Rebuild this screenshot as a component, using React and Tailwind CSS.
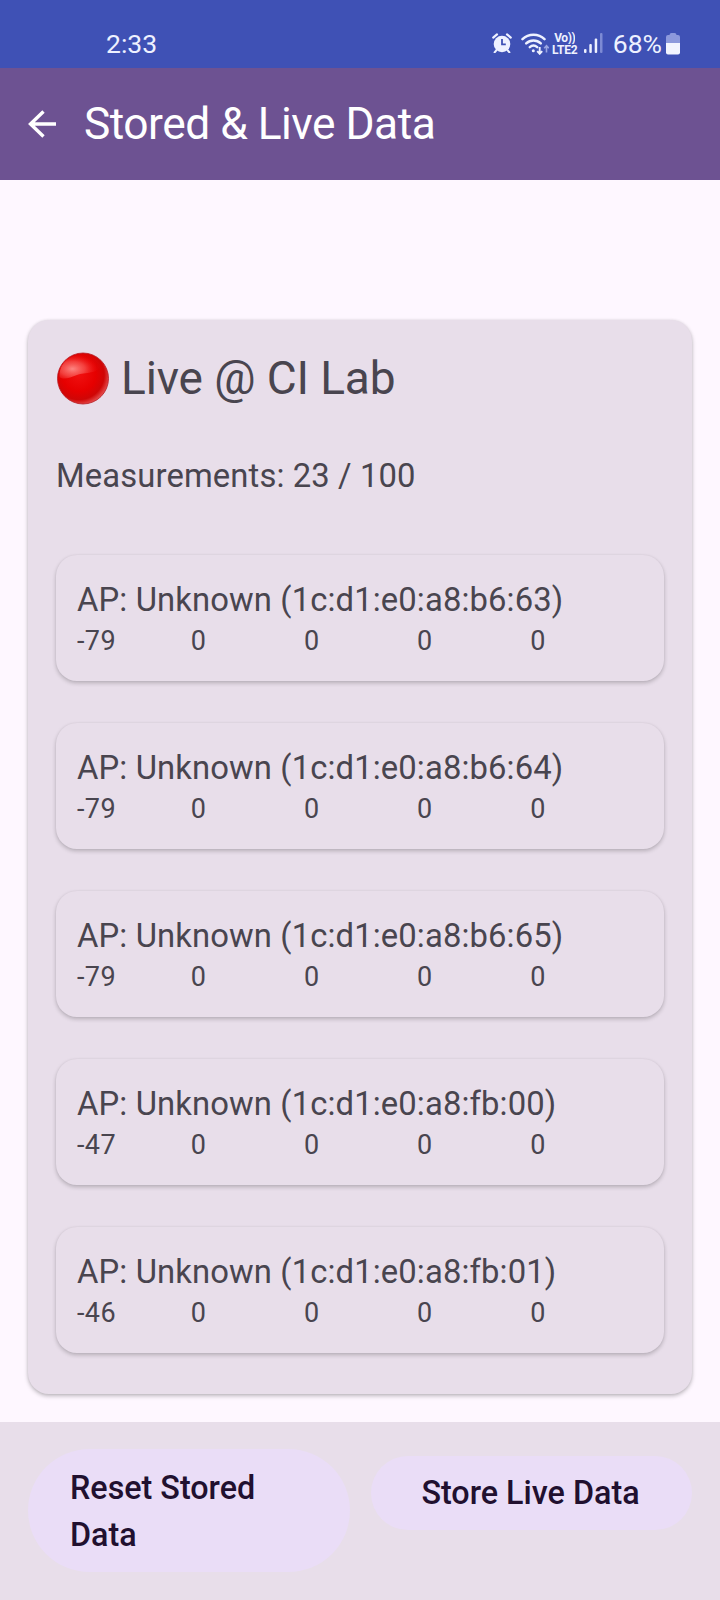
const accessPoints = [
  { mac: '1c:d1:e0:a8:b6:63', values: [-79, 0, 0, 0, 0] },
  { mac: '1c:d1:e0:a8:b6:64', values: [-79, 0, 0, 0, 0] },
  { mac: '1c:d1:e0:a8:b6:65', values: [-79, 0, 0, 0, 0] },
  { mac: '1c:d1:e0:a8:fb:00', values: [-47, 0, 0, 0, 0] },
  { mac: '1c:d1:e0:a8:fb:01', values: [-46, 0, 0, 0, 0] },
];

function AlarmIcon() {
  return (
    <svg className="h-5 w-5" viewBox="0 0 20 20" fill="none">
      <circle cx="10" cy="11" r="8.3" fill="#eef1ff" />
      <path d="M1.2 4.6 5 1.4M18.8 4.6 15 1.4" stroke="#eef1ff" strokeWidth="2.2" strokeLinecap="round" />
      <path d="M4.6 17 2.6 19.4M15.4 17l2 2.4" stroke="#eef1ff" strokeWidth="2" strokeLinecap="round" />
      <path d="M10 6v5.3h3.8" stroke="#3f51b5" strokeWidth="1.8" />
    </svg>
  );
}

function WifiIcon() {
  return (
    <svg className="h-[22px] w-[28px]" viewBox="0 0 28 22" fill="none">
      <g stroke="#eef1ff" strokeWidth="2.5" strokeLinecap="round">
        <path d="M1.5 6.2C7.5.4 17.5.4 23.5 6.2" />
        <path d="M5.2 10.4c4.2-3.9 10.4-3.9 14.6 0" />
        <path d="M8.8 14.2c2.2-2 5.2-2 7.4 0" />
      </g>
      <circle cx="12.3" cy="17.8" r="1.5" fill="#eef1ff" />
      <path d="M18.7 14v6.5M16.2 18.2l2.5 2.6 2.5-2.6" stroke="#eef1ff" strokeWidth="1.9" />
      <path d="M25.5 19.5V13M23.2 15.3l2.3-2.5 2.3 2.5" stroke="#9aa5e2" strokeWidth="1.6" />
    </svg>
  );
}

function VolteIcon() {
  return (
    <div className="flex w-[28px] flex-col items-center text-[12px] leading-[12px] font-bold text-[#eef1ff]">
      <span className="block h-[12px] overflow-hidden tracking-[-0.4px]">Vo))</span>
      <span className="block h-[12px] overflow-hidden tracking-[-0.2px]">LTE2</span>
    </div>
  );
}

function SignalIcon() {
  return (
    <svg className="h-5 w-[19px]" viewBox="0 0 19 20">
      <rect x="0" y="16" width="2.5" height="4" rx="1" fill="#eef1ff" />
      <rect x="5.3" y="11" width="2.5" height="9" rx="1" fill="#eef1ff" />
      <rect x="10.7" y="5.5" width="2.5" height="14.5" rx="1" fill="#eef1ff" />
      <rect x="16" y="0" width="2.5" height="20" rx="1" fill="#7d8ad4" />
    </svg>
  );
}

function BatteryIcon() {
  return (
    <svg className="h-[22px] w-[14px]" viewBox="0 0 14 22">
      <path d="M3.5 2Q3.5 0 5.5 0h3Q10.5 0 10.5 2H12q2 0 2 2v6H0V4q0-2 2-2z" fill="#8d99dc" />
      <path d="M0 10h14v9.5q0 2-2 2H2q-2 0-2-2z" fill="#f2f4ff" />
    </svg>
  );
}

function StatusBar() {
  return (
    <div className="flex h-[68px] items-start justify-between bg-[#3f51b5] pr-10 pl-[106px] text-[#eef1ff]">
      <span className="pt-[28px] text-[26.5px] leading-[32px]">2:33</span>
      <div className="flex items-start">
        <div className="mt-[33px]"><AlarmIcon /></div>
        <div className="mt-[33px] ml-[9px]"><WifiIcon /></div>
        <div className="mt-[32px] ml-[2px]"><VolteIcon /></div>
        <div className="mt-[33px] ml-[5px]"><SignalIcon /></div>
        <span className="mt-[28px] ml-[10px] text-[26.5px] leading-[32px]">68%</span>
        <div className="mt-[33px] ml-[4px]"><BatteryIcon /></div>
      </div>
    </div>
  );
}

function AppBar() {
  return (
    <header className="flex h-[112px] items-center bg-[#6d5292] pl-7 text-white">
      <svg className="h-7 w-7" viewBox="0 0 28 28" fill="none" stroke="#fff" strokeWidth="3.4">
        <path d="M28 14H2.5M15.5 1.5 2.5 14l13 12.5" />
      </svg>
      <h1 className="ml-[28px] text-[44.3px] leading-[56px] tracking-[-0.5px] whitespace-nowrap">Stored &amp; Live Data</h1>
    </header>
  );
}

function RedBall() {
  return (
    <svg className="h-[53px] w-[52px]" viewBox="0 0 52 53">
      <defs>
        <radialGradient id="ball" cx="0.42" cy="0.42" r="0.66">
          <stop offset="0" stopColor="#f01010" />
          <stop offset="0.5" stopColor="#e60000" />
          <stop offset="0.75" stopColor="#cf0606" />
          <stop offset="1" stopColor="#f07070" />
        </radialGradient>
        <radialGradient id="shine" cx="0.32" cy="0.6" r="0.62">
          <stop offset="0" stopColor="#ff9490" stopOpacity="0.9" />
          <stop offset="0.5" stopColor="#fa6662" stopOpacity="0.6" />
          <stop offset="1" stopColor="#f02020" stopOpacity="0.05" />
        </radialGradient>
      </defs>
      <circle cx="26" cy="26.5" r="25.5" fill="url(#ball)" stroke="#b81a22" strokeWidth="0.8" />
      <path d="M2.5 25C2 11 13 2.5 25 2.5c10 0 17 5 18 11C42 22 28 20 20 23C13 26 6 28 2.5 25z" fill="url(#shine)" />
    </svg>
  );
}

function AccessPointCard({ mac, values }) {
  return (
    <section className="h-[126px] rounded-[21px] bg-[#e8deea] px-[21px] pt-[22px] shadow-[0_2px_4px_rgba(0,0,0,0.22),0_0_2px_rgba(0,0,0,0.05)]">
      <p className="text-[32.8px] leading-[47px] tracking-[0.12px] whitespace-nowrap">AP: Unknown ({mac})</p>
      <div className="-mt-[2px] grid grid-cols-5 text-[27px] leading-[39px] tracking-[0.4px]">
        {values.map((value, i) => (
          <span key={i} className={i === 0 ? '' : 'pl-[0.5px]'}>{value}</span>
        ))}
      </div>
    </section>
  );
}

export default function App() {
  return (
    <div className="flex h-[1600px] w-[720px] flex-col overflow-hidden bg-[#fef7ff] font-['Roboto',sans-serif] text-[#49454f]">
      <StatusBar />
      <AppBar />
      <main className="flex-1 px-7 pt-[140px]">
        <div className="h-[1074px] rounded-[21px] bg-[#e8deea] px-7 pt-[27px] shadow-[0_2px_4px_rgba(0,0,0,0.25),0_0_3px_rgba(0,0,0,0.08)]">
          <h2 className="flex h-[62px] items-center pl-px">
            <RedBall />
            <span className="ml-[12px] text-[46px] leading-[62px] tracking-[-0.12px] whitespace-nowrap">Live @ CI Lab</span>
          </h2>
          <p className="mt-[44px] text-[32.8px] leading-[47px] tracking-[0.12px]">Measurements: 23 / 100</p>
          <div className="mt-[55px] flex flex-col gap-[42px]">
            {accessPoints.map((ap) => (
              <AccessPointCard key={ap.mac} mac={ap.mac} values={ap.values} />
            ))}
          </div>
        </div>
      </main>
      <footer className="flex h-[178px] items-start gap-[21px] bg-[#e8deea] px-7 pt-[27px] text-[32.3px] leading-[47px] font-medium text-[#21102f]">
        <button className="h-[123px] w-[322px] shrink-0 rounded-full bg-[#eaddf7] px-[42px] pt-[3px] text-left">
          Reset Stored Data
        </button>
        <button className="mt-[7px] h-[74px] w-[321px] shrink-0 rounded-full bg-[#eaddf7] pr-[2px] text-center">
          Store Live Data
        </button>
      </footer>
    </div>
  );
}
